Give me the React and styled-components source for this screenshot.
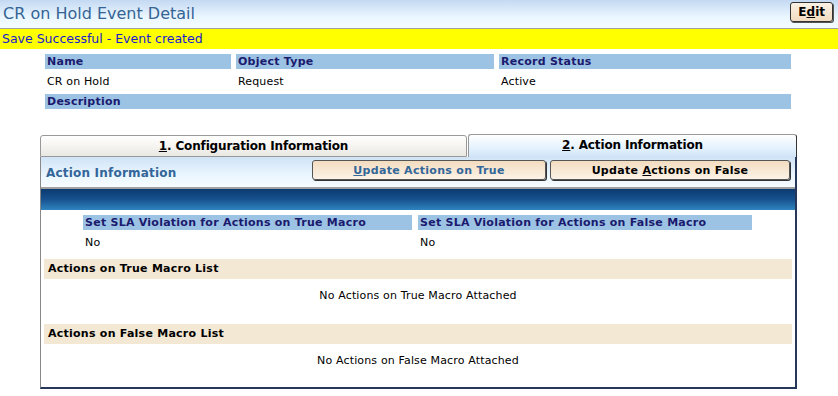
import React from "react";
import styled, { createGlobalStyle } from "styled-components";

const Global = createGlobalStyle`
  html, body { margin: 0; padding: 0; background: #fff; }
  body { font-family: Verdana, "DejaVu Sans", sans-serif; font-size: 11px; color: #000; }
`;

const Page = styled.div`
  width: 838px;
  height: 396px;
  overflow: hidden;
  display: flex;
  flex-direction: column;
`;

const TitleBar = styled.div`
  height: 28px;
  border-bottom: 1px solid #a0a0a0;
  background: linear-gradient(#c4d9f2, #eaf6ff 60%, #f4fcff);
  display: flex;
  align-items: center;
  justify-content: space-between;
  padding: 0 5px 0 3px;
`;

const Title = styled.h1`
  margin: 0;
  font-size: 16px;
  font-weight: normal;
  color: #356494;
  margin-top: -2px;
`;

const SmallButton = styled.button`
  font-family: inherit;
  font-weight: bold;
  font-size: 12px;
  height: 20px;
  padding: 0 7px;
  margin-top: -4px;
  border: 1px solid #333;
  border-radius: 3px;
  background: linear-gradient(#fbf1e4, #f1dcc0);
  box-shadow: 1px 1px 0 #555;
  color: #000;
`;

const Message = styled.div`
  height: 20px;
  background: #ffff00;
  color: #1a1ad0;
  font-size: 12.5px;
  line-height: 20px;
  padding-left: 2px;
`;

const Fields = styled.div`
  margin: 5px 0 0 45px;
  width: 746px;
  display: grid;
  grid-template-columns: 186px 258px 292px;
  column-gap: 5px;
`;

const Label = styled.div`
  background: #9dc3e4;
  color: #1a1a6e;
  font-weight: bold;
  height: 15px;
  line-height: 15px;
  padding-left: 2px;
  letter-spacing: 0.25px;
  grid-column: ${p => p.$span || "auto"};
  white-space: nowrap;
`;

const Value = styled.div`
  height: 25px;
  line-height: 25px;
  padding-left: 2px;
  letter-spacing: 0.15px;
`;

const Tabs = styled.div`
  margin: 25px 0 0 40px;
  width: 757px;
  display: flex;
  align-items: flex-end;
`;

const Tab = styled.div`
  box-sizing: border-box;
  width: ${p => p.$w}px;
  height: ${p => (p.$active ? 23 : 22)}px;
  line-height: 21px;
  text-align: center;
  font-weight: bold;
  font-size: 12px;
  letter-spacing: -0.15px;
  border: 1px solid #999;
  border-bottom: ${p => (p.$active ? "none" : "1px solid #999")};
  border-right-color: ${p => (p.$active ? "#333" : "#999")};
  border-radius: 3px 3px 0 0;
  background: ${p =>
    p.$active
      ? "linear-gradient(#ffffff, #e4f2fd 60%, #cfe3f6)"
      : "linear-gradient(#ffffff, #f4f2ee 60%, #e9e7e2)"};
  margin-right: ${p => (p.$active ? 0 : 1)}px;
`;

const Panel = styled.div`
  margin-left: 40px;
  width: 757px;
  box-sizing: border-box;
  height: 232px;
  border-left: 1px solid #888;
  border-right: 2px solid #26385a;
  border-bottom: 2px solid #26385a;
  display: flex;
  flex-direction: column;
`;

const ActionBar = styled.div`
  height: 30px;
  border-bottom: 2px solid #a0a0a0;
  background: linear-gradient(#cfe3f6, #eaf6ff 60%, #f6fcff);
  display: flex;
  align-items: center;
  padding: 0 5px;
`;

const ActionTitle = styled.div`
  color: #336699;
  font-weight: bold;
  font-size: 12px;
  letter-spacing: 0.2px;
  flex: 1;
  margin-top: 1px;
`;

const ActionButton = styled.button`
  font-family: inherit;
  font-weight: bold;
  font-size: 11px;
  letter-spacing: 0.3px;
  box-sizing: border-box;
  width: ${p => p.$w}px;
  height: 20px;
  margin-left: 4px;
  margin-top: -4px;
  border: 1px solid #555;
  border-radius: 3px;
  background: linear-gradient(#f3dcc0, #fcf2e6);
  box-shadow: 1px 1px 0 #333;
  color: ${p => (p.$blue ? "#336699" : "#000")};
`;

const BlueBand = styled.div`
  height: 21px;
  background: linear-gradient(#0b3a70, #17528f 50%, #2f84c0);
`;

const SlaGrid = styled.div`
  margin: 5px 0 0 42px;
  display: grid;
  grid-template-columns: 329px 334px;
  column-gap: 6px;
`;

const SectionBar = styled.div`
  margin: ${p => p.$top}px 3px 0 3px;
  height: 20px;
  line-height: 20px;
  background: #f3e8d4;
  font-weight: bold;
  letter-spacing: 0.25px;
  padding-left: 4px;
`;

const Empty = styled.div`
  text-align: center;
  height: 33px;
  line-height: 33px;
  letter-spacing: 0.15px;
`;

export default function App() {
  return (
    <Page>
      <Global />
      <TitleBar>
        <Title>CR on Hold Event Detail</Title>
        <SmallButton>E<u>d</u>it</SmallButton>
      </TitleBar>
      <Message>Save Successful - Event created</Message>
      <Fields>
        <Label>Name</Label>
        <Label>Object Type</Label>
        <Label>Record Status</Label>
        <Value>CR on Hold</Value>
        <Value>Request</Value>
        <Value>Active</Value>
        <Label $span="1 / 4">Description</Label>
      </Fields>
      <Tabs>
        <Tab $w={427}><u>1</u>. Configuration Information</Tab>
        <Tab $w={329} $active><u>2</u>. Action Information</Tab>
      </Tabs>
      <Panel>
        <ActionBar>
          <ActionTitle>Action Information</ActionTitle>
          <ActionButton $w={234} $blue><u>U</u>pdate Actions on True</ActionButton>
          <ActionButton $w={240}>Update <u>A</u>ctions on False</ActionButton>
        </ActionBar>
        <BlueBand />
        <SlaGrid>
          <Label>Set SLA Violation for Actions on True Macro</Label>
          <Label>Set SLA Violation for Actions on False Macro</Label>
          <Value>No</Value>
          <Value>No</Value>
        </SlaGrid>
        <SectionBar $top={4}>Actions on True Macro List</SectionBar>
        <Empty>No Actions on True Macro Attached</Empty>
        <SectionBar $top={12}>Actions on False Macro List</SectionBar>
        <Empty>No Actions on False Macro Attached</Empty>
      </Panel>
    </Page>
  );
}
